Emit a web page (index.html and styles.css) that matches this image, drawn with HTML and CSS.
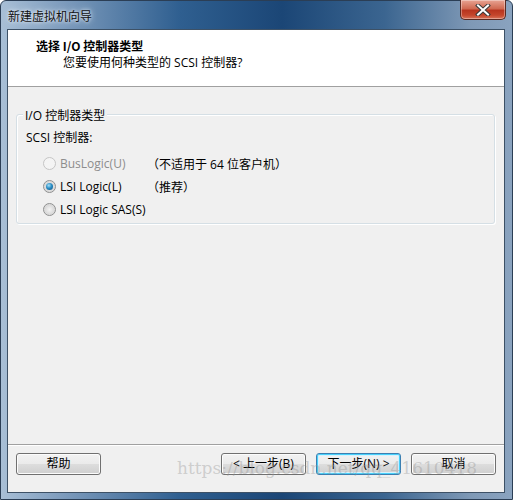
FILE: index.html
```html
<!DOCTYPE html>
<html>
<head>
<meta charset="utf-8">
<link rel="stylesheet" href="styles.css">
</head>
<body>
<div class="window">
  <div class="titlebar">
    <span class="title">新建虚拟机向导</span>
    <div class="close"><svg width="16" height="12" viewBox="0 0 16 12"><path d="M3 1.5 L13 10.5 M13 1.5 L3 10.5" stroke="#3a3a3a" stroke-width="4" stroke-linecap="square"/><path d="M3 1.5 L13 10.5 M13 1.5 L3 10.5" stroke="#ffffff" stroke-width="2" stroke-linecap="square"/></svg></div>
  </div>
  <div class="client">
    <div class="header">
      <div class="h-title">选择 I/O 控制器类型</div>
      <div class="h-sub">您要使用何种类型的 SCSI 控制器?</div>
    </div>
    <div class="body">
      <div class="group">
        <div class="legend">I/O 控制器类型</div>
        <div class="label">SCSI 控制器:</div>
        <div class="opts">
          <div class="opt disabled"><span class="radio"></span><span class="opt-name">BusLogic(U)</span><span class="note">（不适用于 64 位客户机）</span></div>
          <div class="opt"><span class="radio checked"></span><span class="opt-name">LSI Logic(L)</span><span class="note">（推荐）</span></div>
          <div class="opt"><span class="radio"></span><span class="opt-name">LSI Logic SAS(S)</span></div>
        </div>
      </div>
    </div>
    <div class="footer">
      <div class="btn">帮助</div>
      <div class="spacer"></div>
      <div class="btn">&lt; 上一步(B)</div>
      <div class="btn default">下一步(N) &gt;</div>
      <div class="btn">取消</div>
      <div class="watermark">https://blog.csdn.net/qq_41610418</div>
    </div>
  </div>
</div>
</body>
</html>
```
FILE: styles.css
```css
html, body { margin: 0; padding: 0; }
body {
  width: 513px;
  height: 500px;
  overflow: hidden;
  font-family: "Open Sans", "Noto Sans CJK SC", sans-serif;
  font-size: 12px;
  color: #000;
}
.window {
  height: 500px;
  display: flex;
  flex-direction: column;
  background: linear-gradient(90deg, #a8bfd6 0%, #7e9cbd 12%, #2f5f90 35%, #1b4676 55%, #3b6590 75%, #7f99b6 92%, #8aa3bf 100%);
  box-sizing: border-box;
  border: 1px solid #2b3e55;
  border-radius: 6px 6px 0 0;
}
.titlebar {
  height: 28px;
  display: flex;
  align-items: flex-start;
  position: relative;
}
.title {
  margin: 6px 0 0 7px;
  font-family: "Noto Sans CJK SC", sans-serif;
  font-size: 12px;
  color: #111;
  text-shadow: 0 0 6px #e6eef7, 0 0 3px #e6eef7;
}
.close {
  position: absolute;
  right: 6px;
  top: -1px;
  width: 46px;
  height: 20px;
  box-sizing: border-box;
  border: 1px solid #5a2a22;
  border-top: none;
  border-radius: 0 0 5px 5px;
  background: linear-gradient(180deg, #e8a493 0%, #d06a52 45%, #b8351f 55%, #c5462c 80%, #d7745a 100%);
  display: flex;
  align-items: center;
  justify-content: center;
  box-shadow: inset 0 0 0 1px rgba(255,255,255,0.35);
}
.client {
  flex: 1;
  margin: 0 7px 6px 6px;
  background: #f0f0f0;
  border: 1px solid #3d5166;
  display: flex;
  flex-direction: column;
}
.header {
  height: 56px;
  background: #fff;
  border-bottom: 1px solid #a0a0a0;
  box-sizing: content-box;
}
.h-title {
  margin: 7px 0 0 28px;
  font-weight: bold;
  font-family: "Noto Sans CJK SC", sans-serif;
  line-height: 17px;
}
.h-sub {
  margin: 0 0 0 55px;
  line-height: 17px;
}
.body {
  padding: 27px 9px 0 8px;
  flex: 1;
}
.group {
  position: relative;
  border: 1px solid #d5dfe5;
  border-radius: 3px;
  height: 110px;
  box-sizing: border-box;
  padding: 14px 0 0 9px;
  box-shadow: inset 1px 1px 0 #fff, 1px 1px 0 #fff;
}
.legend {
  position: absolute;
  left: 6px;
  top: -8px;
  padding: 0 2px;
  background: #f0f0f0;
  line-height: 17px;
}
.label { line-height: 17px; }
.opts {
  margin: 9px 0 0 17px;
  display: flex;
  flex-direction: column;
  gap: 6px;
}
.opt {
  display: flex;
  align-items: center;
  height: 17px;
}
.opt-name { width: 87px; margin-left: 4px; }
.disabled .opt-name { color: #8d8d8d; }
.radio {
  width: 13px;
  height: 13px;
  box-sizing: border-box;
  border-radius: 50%;
  border: 1px solid #8e8f8f;
  background: radial-gradient(circle at 50% 50%, #f4f4f4 0%, #d9d9d9 60%, #f4f4f4 100%);
  position: relative;
}
.disabled .radio { border-color: #c5c5c5; background: #f4f4f4; }
.radio.checked::after {
  content: "";
  position: absolute;
  left: 2px;
  top: 2px;
  width: 7px;
  height: 7px;
  border-radius: 50%;
  background: radial-gradient(circle at 40% 35%, #a7e0f9 0%, #2b8fc5 45%, #0b4a7d 100%);
}
.footer {
  position: relative;
  border-top: 1px solid #a0a0a0;
  box-shadow: inset 0 1px 0 #fff;
  height: 39px;
  display: flex;
  align-items: flex-start;
  padding: 8px 8px 0 8px;
  gap: 10px;
}
.spacer { flex: 1; }
.btn {
  width: 85px;
  height: 22px;
  box-sizing: border-box;
  border: 1px solid #707070;
  border-radius: 3px;
  background: linear-gradient(180deg, #f2f2f2 0%, #ebebeb 48%, #dddddd 52%, #cfcfcf 100%);
  box-shadow: inset 0 0 0 1px #fcfcfc;
  text-align: center;
  line-height: 20px;
  font-size: 12px;
}
.btn.default {
  border-color: #3c7fb1;
  box-shadow: inset 0 0 0 1px #48d1fb, inset 0 0 0 2px #d6f1fd;
}
.watermark {
  position: absolute;
  left: 169px;
  top: 13px;
  font-family: "DejaVu Serif", "Liberation Serif", serif;
  font-size: 17px;
  color: rgba(150,150,150,0.4);
  white-space: nowrap;
  pointer-events: none;
}
```
